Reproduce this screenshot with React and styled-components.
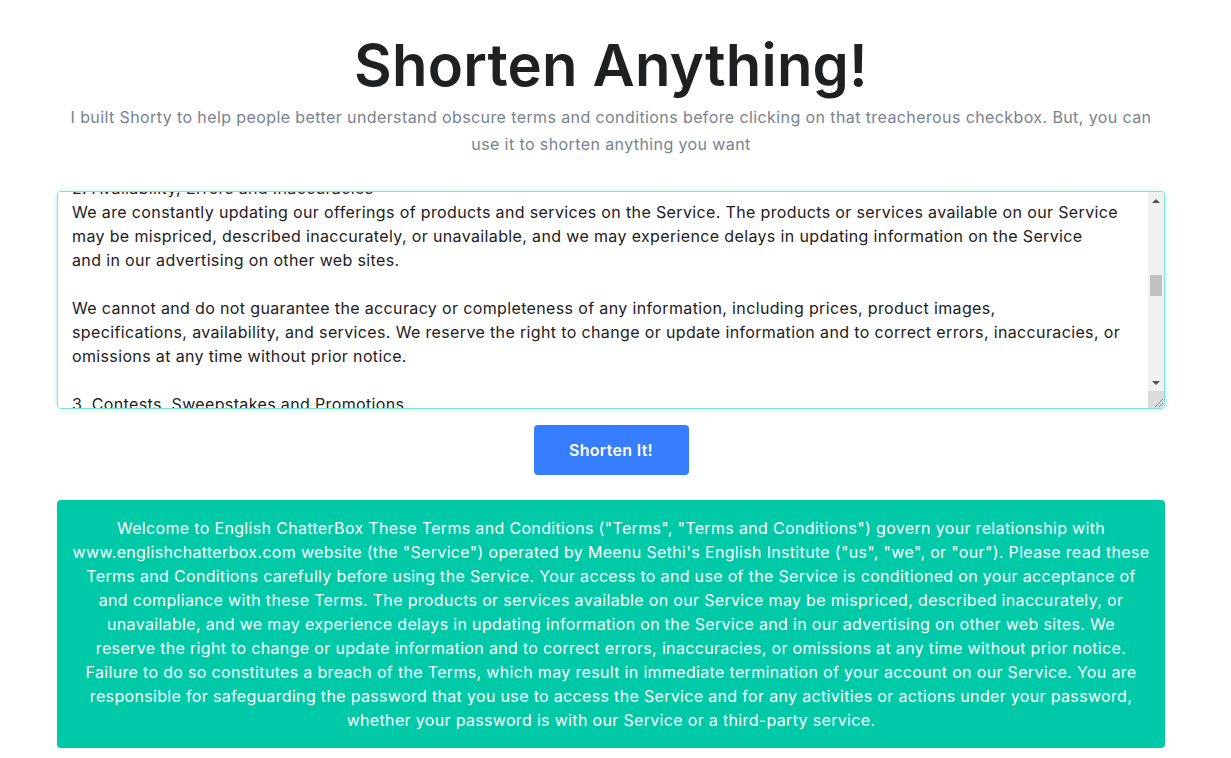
import React from "react"
import styled, { createGlobalStyle } from "styled-components"

const GlobalStyle = createGlobalStyle`
  html, body {
    margin: 0;
    padding: 0;
    background: #fff;
  }
  body {
    padding-right: 9px;
    font-family: Inter, "Open Sans", "Liberation Sans", sans-serif;
    color: #1e2022;
  }
`

const Page = styled.main`
  width: 1108px;
  margin: 0 auto;
  padding-top: 30px;
  display: flex;
  flex-direction: column;
  align-items: center;
`

const Title = styled.h1`
  margin: 0;
  font-size: 58px;
  line-height: 70px;
  font-weight: 600;
  color: #1e2022;
  letter-spacing: 0.2px;
`

const Lead = styled.p`
  margin: 4px 0 0;
  font-size: 16px;
  line-height: 27px;
  letter-spacing: 0.4px;
  color: #77838f;
  text-align: center;
`

const Field = styled.div`
  box-sizing: border-box;
  width: 100%;
  height: 218px;
  margin-top: 33px;
  display: flex;
  border: 1px solid #7fe3d2;
  border-radius: 4px;
  box-shadow: 0 0 6px rgba(0, 201, 167, 0.25);
  overflow: hidden;
  background: #fff;
`

const Input = styled.textarea`
  flex: 1;
  min-width: 0;
  height: 100%;
  box-sizing: border-box;
  margin: 0;
  padding: 6px 14px;
  border: none;
  font-family: inherit;
  font-size: 16px;
  line-height: 24px;
  letter-spacing: 0.36px;
  color: #1e2022;
  outline: none;
  resize: none;
  overflow: hidden;
`

const Scrollbar = styled.div`
  width: 16px;
  display: flex;
  flex-direction: column;
  background: #f1f1f1;
`

const ArrowBtn = styled.div`
  height: 17px;
  display: flex;
  align-items: center;
  justify-content: center;
  &::before {
    content: "";
    border-left: 4px solid transparent;
    border-right: 4px solid transparent;
    ${(p) => (p.$down ? "border-top: 4px solid #505050;" : "border-bottom: 4px solid #505050;")}
  }
`

const Track = styled.div`
  flex: 1;
  padding: 0 2px;
`

const Thumb = styled.div`
  margin-top: 66px;
  height: 21px;
  background: #c1c1c1;
`

const Corner = styled.div`
  height: 17px;
  background: #dcdcdc;
  display: flex;
  align-items: flex-end;
  justify-content: flex-end;
`

const Button = styled.button`
  margin-top: 16px;
  width: 155px;
  height: 50px;
  border: none;
  border-radius: 4px;
  background: #377dff;
  color: #fff;
  font-family: inherit;
  font-size: 16px;
  font-weight: 600;
  letter-spacing: 0.3px;
  cursor: pointer;
`

const Result = styled.div`
  box-sizing: border-box;
  width: 100%;
  margin: 25px 0 10px;
  padding: 16px 0;
  border-radius: 4px;
  background: #00c9a7;
  color: #fff;
  font-size: 16px;
  line-height: 24px;
  letter-spacing: 0.33px;
  text-align: center;
`

const Line = styled.span`
  display: block;
  white-space: nowrap;
`

const before = [
  "Terms and Conditions",
  "",
  "Last updated: January 01, 2021",
  "",
  "Please read these Terms and Conditions carefully before using the www.englishchatterbox.com website",
  "(the \"Service\") operated by Meenu Sethi's English Institute (\"us\", \"we\", or \"our\").",
  "",
  "Your access to and use of the Service is conditioned on your acceptance of and compliance with these Terms.",
  "These Terms apply to all visitors, users and others who access or use the Service.",
  "",
  "By accessing or using the Service you agree to be bound by these Terms.",
  "If you disagree with any part of the terms then you may not access the Service.",
  "",
  "1. Accounts",
  "When you create an account with us, you must provide us information that is accurate, complete, and current at all times.",
  "Failure to do so constitutes a breach of the Terms, which may result in immediate termination of your account on our Service.",
  "",
  "You are responsible for safeguarding the password that you use to access the Service and for any activities",
  "or actions under your password, whether your password is with our Service or a third-party service.",
  "",
  "You agree not to disclose your password to any third party. You must notify us immediately upon becoming aware",
  "of any breach of security or unauthorized use of your account.",
  "",
  "You may not use as a username the name of another person or entity or that is not lawfully available for use,",
  "a name or trade mark that is subject to any rights of another person or entity other than you without appropriate",
  "authorization, or a name that is otherwise offensive, vulgar or obscene.",
  "",
]

const after = [
  "Any contests, sweepstakes or other promotions made available through the Service may be governed by rules",
  "that are separate from these Terms and Conditions. If you participate in any Promotions, please review the applicable",
  "rules as well as our Privacy Policy. If the rules for a Promotion conflict with these Terms, the Promotion rules will apply.",
  "",
  "4. Purchases",
  "If you wish to purchase any product or service made available through the Service, you may be asked to supply",
  "certain information relevant to your Purchase including, without limitation, your credit card number,",
  "the expiration date of your credit card, your billing address, and your shipping information.",
  "",
  "5. Intellectual Property",
  "The Service and its original content, features and functionality are and will remain the exclusive property",
  "of Meenu Sethi's English Institute and its licensors.",
  "",
  "6. Links To Other Web Sites",
  "Our Service may contain links to third-party web sites or services that are not owned or controlled by us.",
  "",
  "7. Termination",
  "We may terminate or suspend your account immediately, without prior notice or liability, for any reason whatsoever.",
  "",
  "8. Contact Us",
  "If you have any questions about these Terms, please contact us.",
]

const lines = [
  ...before,
  "2. Availability, Errors and Inaccuracies",
  "We are constantly updating our offerings of products and services on the Service. The products or services available on our Service",
  "may be mispriced, described inaccurately, or unavailable, and we may experience delays in updating information on the Service",
  "and in our advertising on other web sites.",
  "",
  "We cannot and do not guarantee the accuracy or completeness of any information, including prices, product images,",
  "specifications, availability, and services. We reserve the right to change or update information and to correct errors, inaccuracies, or",
  "omissions at any time without prior notice.",
  "",
  "3. Contests, Sweepstakes and Promotions",
  ...after,
]

const summary = [
  'Welcome to English ChatterBox These Terms and Conditions ("Terms", "Terms and Conditions") govern your relationship with',
  'www.englishchatterbox.com website (the "Service") operated by Meenu Sethi\'s English Institute ("us", "we", or "our"). Please read these',
  "Terms and Conditions carefully before using the Service. Your access to and use of the Service is conditioned on your acceptance of",
  "and compliance with these Terms. The products or services available on our Service may be mispriced, described inaccurately, or",
  "unavailable, and we may experience delays in updating information on the Service and in our advertising on other web sites. We",
  "reserve the right to change or update information and to correct errors, inaccuracies, or omissions at any time without prior notice.",
  "Failure to do so constitutes a breach of the Terms, which may result in immediate termination of your account on our Service. You are",
  "responsible for safeguarding the password that you use to access the Service and for any activities or actions under your password,",
  "whether your password is with our Service or a third-party service.",
]

const App = () => {
  const [text, setText] = React.useState(lines.join("\n"))
  const ref = React.useRef(null)

  // scroll so section 2 sits at the top, as in the screenshot
  React.useLayoutEffect(() => {
    if (ref.current) ref.current.scrollTop = 22 + 24 * before.length
  }, [])

  return (
    <>
      <GlobalStyle />
      <Page>
        <Title>Shorten Anything!</Title>
        <Lead>
          I built Shorty to help people better understand obscure terms and conditions before clicking on that treacherous checkbox. But, you can
          <br />
          use it to shorten anything you want
        </Lead>
        <Field>
          <Input ref={ref} value={text} onChange={(e) => setText(e.target.value)} />
          <Scrollbar>
            <ArrowBtn />
            <Track>
              <Thumb />
            </Track>
            <ArrowBtn $down />
            <Corner>
              <svg width="12" height="12" viewBox="0 0 12 12">
                <path d="M3 11 L11 3 M7 11 L11 7" stroke="#8a8a8a" strokeWidth="1" fill="none" />
              </svg>
            </Corner>
          </Scrollbar>
        </Field>
        <Button>Shorten It!</Button>
        <Result>
          {summary.map((line, i) => (
            <Line key={i}>{line}</Line>
          ))}
        </Result>
      </Page>
    </>
  )
}

export default App
